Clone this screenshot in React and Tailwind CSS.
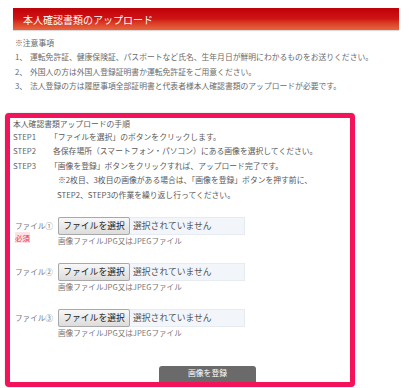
import React from "react";

function FileRow({ label, required, top }) {
  return (
    <div className={`flex ${top}`}>
      <div className="w-[48px] pl-[5px] text-[7.6px] text-[#777]">
        <div className="leading-[18px]">{label}</div>
        {required && (
          <div className="leading-[10px] mt-[-2px]">
            <span className="text-[#e8334a] bg-[#fde3e6] text-[7.4px]">必須</span>
          </div>
        )}
      </div>
      <div className="flex flex-col">
        <div className="w-[187px] h-[18px] bg-[#f2f6fb] border border-[#e6ebf2] flex items-center">
          <div className="h-[18px] w-[72px] -ml-px border border-[#a8a8a8] rounded-[2px] bg-linear-to-b from-[#f8f8f8] to-[#dcdcdc] flex items-center justify-center text-[8.8px] text-[#222]">
            ファイルを選択
          </div>
          <div className="pl-[3px] text-[8.8px] text-[#555]">選択されていません</div>
        </div>
        <div className="text-[7.6px] leading-[12px] text-[#777]">画像ファイルJPG又はJPEGファイル</div>
      </div>
    </div>
  );
}

export default function App() {
  return (
    <div className="w-[409px] h-[388px] bg-white overflow-hidden font-['Noto_Sans_CJK_JP','Noto_Sans',sans-serif]">
      <div className="pt-[8px] pl-[13px] pr-[10px]">
        <div className="h-[22px] bg-linear-to-b from-[#bf0008] via-[#cf1414] to-[#e8663f] flex items-center pl-[10px] text-white text-[10px] shadow-[0_1px_1px_rgba(0,0,0,0.15)]">
          本人確認書類のアップロード
        </div>
      </div>
      <div className="mt-[6px] pl-[15px] text-[7.8px] leading-[14.4px] text-[#6a6a6a]">
        <div>※注意事項</div>
        <div><span className="inline-block w-[15px]">1、</span>運転免許証、健康保険証、パスポートなど氏名、生年月日が鮮明にわかるものをお送りください。</div>
        <div><span className="inline-block w-[15px]">2、</span>外国人の方は外国人登録証明書か運転免許証をご用意ください。</div>
        <div><span className="inline-block w-[15px]">3、</span>法人登録の方は履歴事項全部証明書と代表者様本人確認書類のアップロードが必要です。</div>
      </div>
      <div className="ml-[5px] mt-[19px] w-[350px] h-[274px] border-[5px] border-[#f2135b] rounded-[4px] overflow-hidden bg-white shadow-[0_0_2px_rgba(0,0,0,0.2)]">
        <div className="pl-[3px] text-[7.8px] text-[#5a5a5a]">
          <div className="leading-[12px]">本人確認書類アップロードの手順</div>
          <div className="leading-[14.6px]">
            <div className="flex"><span className="w-[37px] text-[#666]">STEP1</span><span>「ファイルを選択」のボタンをクリックします。</span></div>
            <div className="flex"><span className="w-[40px] text-[#666]">STEP2</span><span>各保存場所（スマートフォン・パソコン）にある画像を選択してください。</span></div>
            <div className="flex"><span className="w-[37px] text-[#666]">STEP3</span><span>「画像を登録」ボタンをクリックすれば、アップロード完了です。</span></div>
            <div className="pl-[45px]">※2枚目、3枚目の画像がある場合は、「画像を登録」ボタンを押す前に、</div>
            <div className="pl-[44px]">STEP2、STEP3の作業を繰り返し行ってください。</div>
          </div>
        </div>
        <FileRow label="ファイル①" required top="mt-[14px]" />
        <FileRow label="ファイル②" top="mt-[16px]" />
        <FileRow label="ファイル③" top="mt-[16px]" />
        <div className="mt-[27px] ml-[149px] w-[97px] h-[20px] bg-[#6a6a6a] rounded-t-[3px] text-white text-[7.8px] leading-[14px] text-center">
          画像を登録
        </div>
      </div>
    </div>
  );
}
